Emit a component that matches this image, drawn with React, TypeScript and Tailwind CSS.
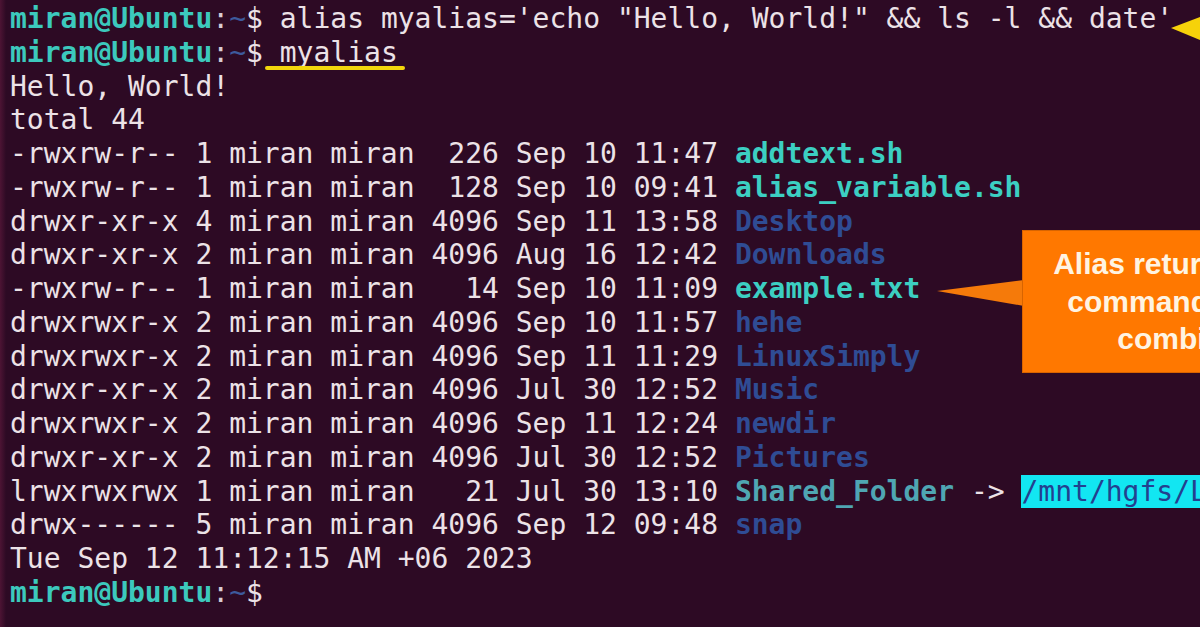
import React from "react";

type Row = {
  meta: string;
  name: string;
  kind: "exec" | "dir" | "link";
  target?: string;
};

const rows: Row[] = [
  { meta: "-rwxrw-r-- 1 miran miran  226 Sep 10 11:47 ", name: "addtext.sh", kind: "exec" },
  { meta: "-rwxrw-r-- 1 miran miran  128 Sep 10 09:41 ", name: "alias_variable.sh", kind: "exec" },
  { meta: "drwxr-xr-x 4 miran miran 4096 Sep 11 13:58 ", name: "Desktop", kind: "dir" },
  { meta: "drwxr-xr-x 2 miran miran 4096 Aug 16 12:42 ", name: "Downloads", kind: "dir" },
  { meta: "-rwxrw-r-- 1 miran miran   14 Sep 10 11:09 ", name: "example.txt", kind: "exec" },
  { meta: "drwxrwxr-x 2 miran miran 4096 Sep 10 11:57 ", name: "hehe", kind: "dir" },
  { meta: "drwxrwxr-x 2 miran miran 4096 Sep 11 11:29 ", name: "LinuxSimply", kind: "dir" },
  { meta: "drwxr-xr-x 2 miran miran 4096 Jul 30 12:52 ", name: "Music", kind: "dir" },
  { meta: "drwxrwxr-x 2 miran miran 4096 Sep 11 12:24 ", name: "newdir", kind: "dir" },
  { meta: "drwxr-xr-x 2 miran miran 4096 Jul 30 12:52 ", name: "Pictures", kind: "dir" },
  {
    meta: "lrwxrwxrwx 1 miran miran   21 Jul 30 13:10 ",
    name: "Shared_Folder",
    kind: "link",
    target: "/mnt/hgfs/Linux",
  },
  { meta: "drwx------ 5 miran miran 4096 Sep 12 09:48 ", name: "snap", kind: "dir" },
];

function Prompt() {
  return (
    <>
      <span className="font-bold text-[#3cc9bd]">miran@Ubuntu</span>
      <span className="text-[#d9cdd4]">:</span>
      <span className="text-[#3d5a9c]">~</span>
      <span className="text-[#ece2e7]">$</span>
    </>
  );
}

function FileName({ row }: { row: Row }) {
  if (row.kind === "dir") {
    return <span className="font-bold text-[#2f4c94]">{row.name}</span>;
  }
  if (row.kind === "link") {
    return (
      <>
        <span className="font-bold text-[#4fa6b3]">{row.name}</span>
        <span className="text-[#ece2e7]"> -&gt; </span>
        <span className="bg-[#12e6f2] text-[#23408f]">{row.target}</span>
      </>
    );
  }
  return <span className="font-bold text-[#3ccfc2]">{row.name}</span>;
}

export default function App() {
  return (
    <div className="relative h-[627px] w-[1200px] overflow-hidden bg-[#2d0a24] font-['DejaVu_Sans_Mono',monospace] text-[28px] leading-[33.75px] text-[#ece2e7]">
      {/* left edge tint */}
      <div className="absolute left-0 top-0 h-full w-[6px] bg-gradient-to-r from-[#4d1434] to-transparent" />

      <div className="flex flex-col whitespace-pre pl-[10px] pt-[2px]">
        <div>
          <Prompt />
          {" alias myalias='echo \"Hello, World!\" && ls -l && date'"}
        </div>
        <div>
          <Prompt />
          {" myalias"}
        </div>
        <div>Hello, World!</div>
        <div>total 44</div>
        {rows.map((row) => (
          <div key={row.name}>
            {row.meta}
            <FileName row={row} />
          </div>
        ))}
        <div>Tue Sep 12 11:12:15 AM +06 2023</div>
        <div>
          <Prompt />
        </div>
      </div>

      {/* yellow underline under myalias */}
      <div className="absolute left-[265px] top-[66px] h-[4px] w-[140px] rounded-full bg-[#f2d60c]" />

      {/* yellow arrow, top right */}
      <svg className="absolute left-[1168px] top-[12px]" width="32" height="32" viewBox="0 0 32 32">
        <polygon points="3,16 32,5 32,28" fill="#f6d20a" />
      </svg>

      {/* callout pointer */}
      <svg className="absolute left-[936px] top-[278px]" width="90" height="30" viewBox="0 0 90 30">
        <polygon points="1,13 88,2 88,28" fill="#f57a0a" />
      </svg>

      {/* callout box */}
      <div className="absolute left-[1022px] top-[230px] flex h-[143px] w-[384px] flex-col justify-center border border-[#d86400] bg-[#ff7800] text-center font-['Liberation_Sans',Arial,sans-serif] text-[30px] font-bold leading-[37.5px] text-[#fff4e2]">
        <div>Alias returns output of</div>
        <div>commands together,</div>
        <div>combined list</div>
      </div>
    </div>
  );
}
